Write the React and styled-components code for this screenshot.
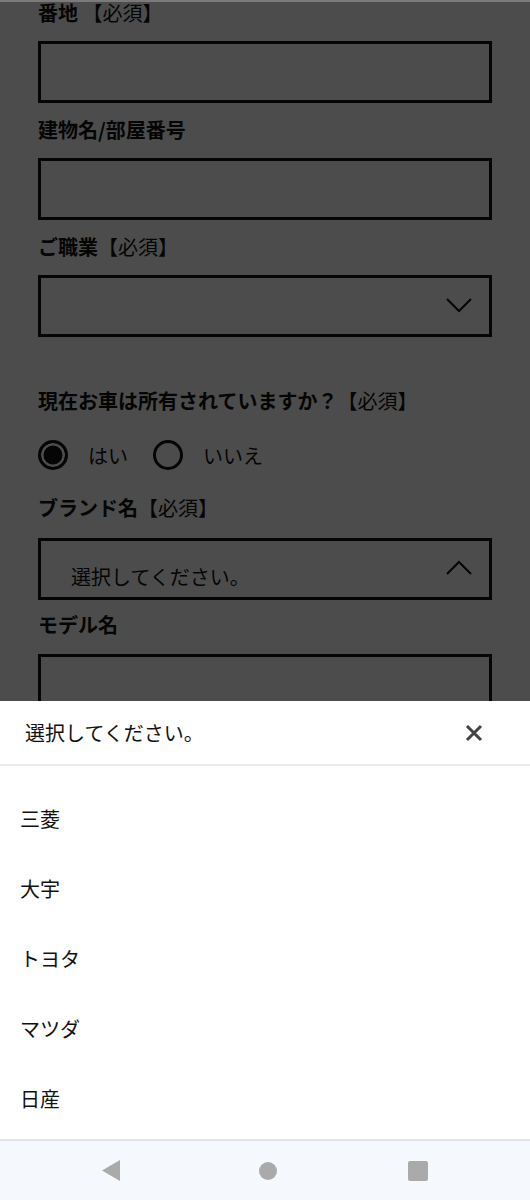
import React from "react";
import styled, { createGlobalStyle } from "styled-components";

const Global = createGlobalStyle`
  html, body { margin: 0; padding: 0; }
  body { font-family: "Noto Sans CJK JP", "Noto Sans", sans-serif; background: #fff; }
`;

const Screen = styled.div`
  width: 530px;
  height: 1200px;
  display: flex;
  flex-direction: column;
  overflow: hidden;
`;

const Content = styled.div`
  position: relative;
  flex: 1;
  overflow: hidden;
  background: #fff;
`;

const Form = styled.div`
  display: flex;
  flex-direction: column;
  padding: 0 38px;
`;

const Field = styled.div`
  display: flex;
  flex-direction: column;
  margin-top: ${(p) => p.$gap ?? 14}px;
`;

const Label = styled.div`
  font-size: 20px;
  line-height: 26px;
  font-weight: 700;
  color: #111;
  margin-bottom: ${(p) => p.$mb ?? 15}px;
  white-space: nowrap;
`;

const Req = styled.span`
  font-weight: 400;
`;

const Box = styled.div`
  box-sizing: border-box;
  height: 62px;
  border: 3px solid #111;
  display: flex;
  align-items: ${(p) => (p.$low ? "flex-end" : "center")};
  justify-content: space-between;
  padding: 0 19px 0 30px;
  position: relative;
`;

const BoxText = styled.span`
  font-size: 20px;
  color: #111;
  line-height: 26px;
  padding-bottom: 7px;
`;

const Chevron = styled.svg`
  position: absolute;
  right: 17px;
  top: ${(p) => p.$top}px;
`;

const RadioRow = styled.div`
  display: flex;
  align-items: center;
  margin-top: 26px;
  height: 30px;
`;

const RadioCircle = styled.span`
  box-sizing: border-box;
  width: 30px;
  height: 30px;
  border-radius: 50%;
  border: 3px solid #111;
  background: ${(p) => (p.$on ? "#111" : "#fff")};
  box-shadow: ${(p) => (p.$on ? "inset 0 0 0 2.5px #fff" : "none")};
  flex-shrink: 0;
`;

const RadioText = styled.span`
  font-size: 20px;
  color: #111;
  margin-left: 20px;
  margin-right: 25px;
`;

const Dim = styled.div`
  position: absolute;
  inset: 0;
  background: rgba(0, 0, 0, 0.7);
  border-top: 2px solid #7a7a7a;
`;

const Sheet = styled.div`
  position: absolute;
  left: 0;
  right: 0;
  bottom: 0;
  height: 438px;
  background: #fff;
  display: flex;
  flex-direction: column;
`;

const SheetHeader = styled.div`
  height: 63px;
  display: flex;
  align-items: center;
  justify-content: space-between;
  padding: 0 47px 0 25px;
  border-bottom: 2px solid #ececec;
`;

const SheetTitle = styled.span`
  font-size: 20px;
  color: #111;
`;

const OptionList = styled.div`
  display: flex;
  flex-direction: column;
  padding-top: 17px;
`;

const Option = styled.div`
  height: 70px;
  display: flex;
  align-items: center;
  padding-left: 20px;
  font-size: 20px;
  color: #111;
`;

const NavBar = styled.div`
  height: 61px;
  box-sizing: border-box;
  border-top: 2px solid #dde3e9;
  background: #f5f8fc;
  display: flex;
  align-items: center;
  justify-content: space-between;
  padding: 0 102px 0 102px;
`;

const NavCircle = styled.span`
  width: 18px;
  height: 18px;
  border-radius: 50%;
  background: #aaaaaa;
  margin-left: 8px;
`;

const NavSquare = styled.span`
  width: 20px;
  height: 20px;
  border-radius: 2px;
  background: #aaaaaa;
`;

const Down = () => (
  <Chevron $top={20} width="26" height="15" viewBox="0 0 26 15">
    <polyline points="1,1 13,13 25,1" fill="none" stroke="#111" strokeWidth="2" />
  </Chevron>
);

const Up = () => (
  <Chevron $top={19} width="26" height="15" viewBox="0 0 26 15">
    <polyline points="1,14 13,2 25,14" fill="none" stroke="#111" strokeWidth="2" />
  </Chevron>
);

export default function App() {
  const brands = ["三菱", "大宇", "トヨタ", "マツダ", "日産"];
  return (
    <>
      <Global />
      <Screen>
        <Content>
          <Form>
            <Field $gap={0}>
              <Label>
                番地 <Req>【必須】</Req>
              </Label>
              <Box />
            </Field>
            <Field>
              <Label>建物名/部屋番号</Label>
              <Box />
            </Field>
            <Field>
              <Label>
                ご職業<Req>【必須】</Req>
              </Label>
              <Box>
                <Down />
              </Box>
            </Field>
            <Field $gap={51}>
              <Label $mb={0}>
                現在お車は所有されていますか？<Req>【必須】</Req>
              </Label>
              <RadioRow>
                <RadioCircle $on />
                <RadioText>はい</RadioText>
                <RadioCircle />
                <RadioText>いいえ</RadioText>
              </RadioRow>
            </Field>
            <Field $gap={25}>
              <Label $mb={17}>
                ブランド名<Req>【必須】</Req>
              </Label>
              <Box $low>
                <BoxText>選択してください。</BoxText>
                <Up />
              </Box>
            </Field>
            <Field $gap={12}>
              <Label $mb={16}>モデル名</Label>
              <Box />
            </Field>
          </Form>
          <Dim />
          <Sheet>
            <SheetHeader>
              <SheetTitle>選択してください。</SheetTitle>
              <svg width="18" height="18" viewBox="0 0 18 18">
                <path d="M2 2 L16 16 M16 2 L2 16" stroke="#444" strokeWidth="3" />
              </svg>
            </SheetHeader>
            <OptionList>
              {brands.map((b) => (
                <Option key={b}>{b}</Option>
              ))}
            </OptionList>
          </Sheet>
        </Content>
        <NavBar>
          <svg width="18" height="21" viewBox="0 0 18 21">
            <path d="M18 0 L18 21 L0 10.5 Z" fill="#aaaaaa" />
          </svg>
          <NavCircle />
          <NavSquare />
        </NavBar>
      </Screen>
    </>
  );
}
